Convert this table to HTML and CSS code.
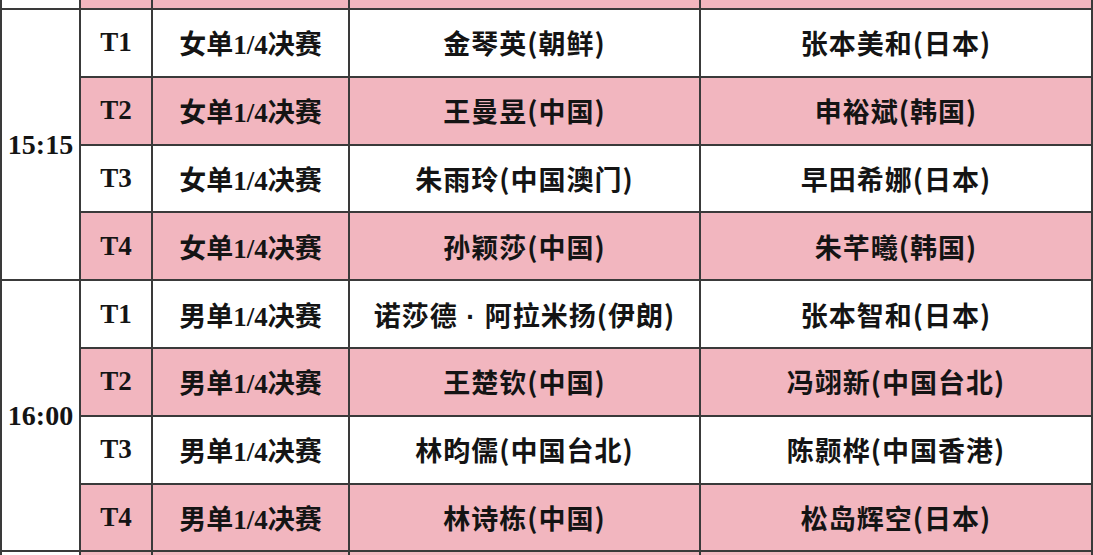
FILE: index.html
```html
<!DOCTYPE html>
<html lang="zh">
<head>
<meta charset="utf-8">
<link rel="stylesheet" href="styles.css">
</head>
<body>
<div class="frame">
<table class="sched">
  <colgroup>
    <col class="c-time"><col class="c-venue"><col class="c-event"><col class="c-p1"><col class="c-p2">
  </colgroup>
  <tr class="edge pink">
    <td class="time"></td><td></td><td></td><td></td><td></td>
  </tr>
  <tr class="row">
    <td class="time" rowspan="4">15:15</td>
    <td class="venue">T1</td><td class="event">女单1/4决赛</td><td class="player">金琴英(朝鲜)</td><td class="player">张本美和(日本)</td>
  </tr>
  <tr class="row pink">
    <td class="venue">T2</td><td class="event">女单1/4决赛</td><td class="player">王曼昱(中国)</td><td class="player">申裕斌(韩国)</td>
  </tr>
  <tr class="row">
    <td class="venue">T3</td><td class="event">女单1/4决赛</td><td class="player">朱雨玲(中国澳门)</td><td class="player">早田希娜(日本)</td>
  </tr>
  <tr class="row pink">
    <td class="venue">T4</td><td class="event">女单1/4决赛</td><td class="player">孙颖莎(中国)</td><td class="player">朱芊曦(韩国)</td>
  </tr>
  <tr class="row">
    <td class="time" rowspan="4">16:00</td>
    <td class="venue">T1</td><td class="event">男单1/4决赛</td><td class="player">诺莎德<span class="dot"> · </span>阿拉米扬(伊朗)</td><td class="player">张本智和(日本)</td>
  </tr>
  <tr class="row pink">
    <td class="venue">T2</td><td class="event">男单1/4决赛</td><td class="player">王楚钦(中国)</td><td class="player">冯翊新(中国台北)</td>
  </tr>
  <tr class="row">
    <td class="venue">T3</td><td class="event">男单1/4决赛</td><td class="player">林昀儒(中国台北)</td><td class="player">陈颢桦(中国香港)</td>
  </tr>
  <tr class="row pink">
    <td class="venue">T4</td><td class="event">男单1/4决赛</td><td class="player">林诗栋(中国)</td><td class="player">松岛辉空(日本)</td>
  </tr>
  <tr class="edge pink">
    <td class="time"></td><td></td><td></td><td></td><td></td>
  </tr>
</table>
</div>
</body>
</html>
```
FILE: styles.css
```css
html, body {
  margin: 0;
  padding: 0;
  background: #ffffff;
}
.frame {
  width: 1093px;
  height: 555px;
  overflow: hidden;
}
.sched {
  border-collapse: collapse;
  table-layout: fixed;
  width: 1091px;
  margin-top: -2px;
  margin-left: 0;
  color: #141414;
}
.sched td {
  border: 2px solid #3a3a3a;
  padding: 0;
  text-align: center;
  vertical-align: middle;
  font-weight: bold;
  white-space: nowrap;
  overflow: hidden;
}
.c-time { width: 79px; }
.c-venue { width: 72px; }
.c-event { width: 197px; }
.c-p1 { width: 351px; }
.c-p2 { width: 392px; }
.edge td { height: 8px; }
.row td { height: 65.8px; }
.pink td { background: #f2b6bf; }
.sched td.time {
  background: #ffffff;
  font-family: "Liberation Serif", serif;
  font-size: 28px;
}
.venue {
  font-family: "Liberation Serif", serif;
  font-size: 27px;
}
.event {
  font-family: "Liberation Serif", "Noto Sans CJK SC", sans-serif;
  font-size: 27px;
}
.player {
  font-family: "Noto Sans CJK SC", sans-serif;
  font-size: 27px;
  letter-spacing: 1px;
}
.dot {
  font-family: "Liberation Sans", sans-serif;
  white-space: pre;
}
```
